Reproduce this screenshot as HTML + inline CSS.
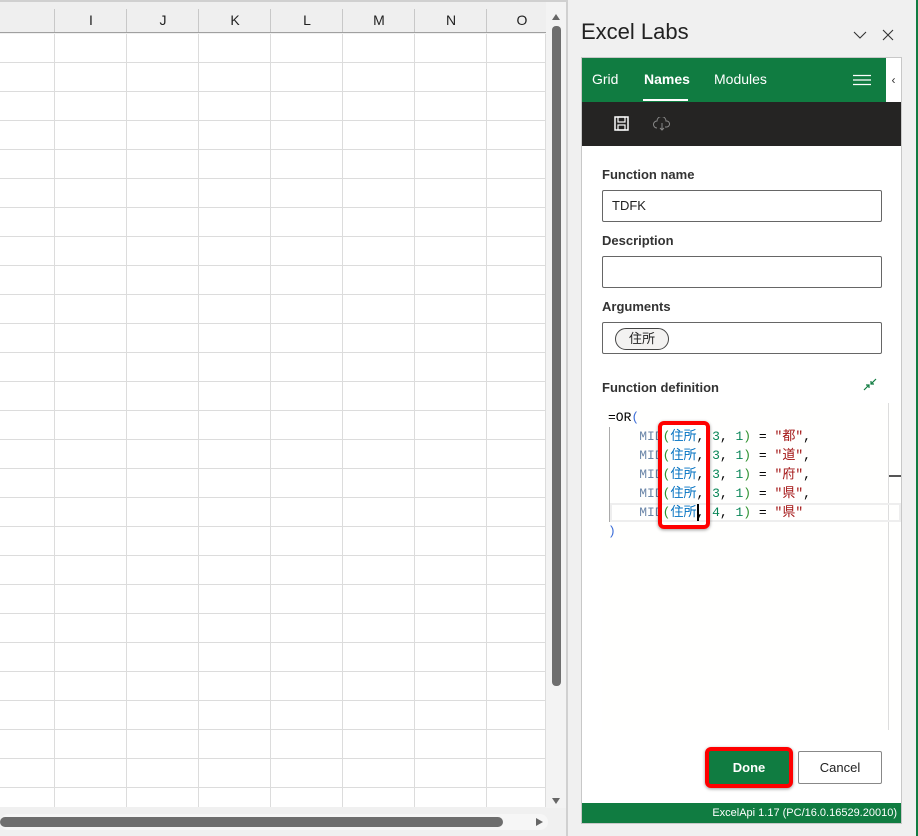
<!DOCTYPE html>
<html><head><meta charset="utf-8"><style>
*{margin:0;padding:0;box-sizing:border-box}
body{width:918px;height:836px;overflow:hidden;background:#f0f0f0;font-family:"Segoe UI","Liberation Sans","Noto Sans CJK JP",sans-serif;position:relative}
.a{position:absolute}
.hd{font-size:14px;color:#222;text-align:center;top:12px;width:72px}
.code{font-family:"Liberation Mono","Noto Sans CJK JP",monospace;font-size:13px;white-space:pre;line-height:19px}
.lbl{font-size:13px;font-weight:bold;color:#333;left:602px}
.box{left:602px;width:280px;height:32px;border:1px solid #666;border-radius:2px;background:#fff}
.m{color:#6b86a8}
</style></head><body>
<div class="a" style="left:0;top:0;width:567px;height:2px;background:#d0d0d0"></div>
<div class="a" style="left:0;top:2px;width:546px;height:31px;background:#efefef;border-bottom:1px solid #a0a0a0"></div>
<svg class="a" style="left:0;top:0" width="546" height="808">
<g stroke="#dcdcdc" stroke-width="1">
<line x1="0" x2="546" y1="62.5" y2="62.5"/><line x1="0" x2="546" y1="91.5" y2="91.5"/><line x1="0" x2="546" y1="120.5" y2="120.5"/><line x1="0" x2="546" y1="149.5" y2="149.5"/><line x1="0" x2="546" y1="178.5" y2="178.5"/><line x1="0" x2="546" y1="207.5" y2="207.5"/><line x1="0" x2="546" y1="236.5" y2="236.5"/><line x1="0" x2="546" y1="265.5" y2="265.5"/><line x1="0" x2="546" y1="294.5" y2="294.5"/><line x1="0" x2="546" y1="323.5" y2="323.5"/><line x1="0" x2="546" y1="352.5" y2="352.5"/><line x1="0" x2="546" y1="381.5" y2="381.5"/><line x1="0" x2="546" y1="410.5" y2="410.5"/><line x1="0" x2="546" y1="439.5" y2="439.5"/><line x1="0" x2="546" y1="468.5" y2="468.5"/><line x1="0" x2="546" y1="497.5" y2="497.5"/><line x1="0" x2="546" y1="526.5" y2="526.5"/><line x1="0" x2="546" y1="555.5" y2="555.5"/><line x1="0" x2="546" y1="584.5" y2="584.5"/><line x1="0" x2="546" y1="613.5" y2="613.5"/><line x1="0" x2="546" y1="642.5" y2="642.5"/><line x1="0" x2="546" y1="671.5" y2="671.5"/><line x1="0" x2="546" y1="700.5" y2="700.5"/><line x1="0" x2="546" y1="729.5" y2="729.5"/><line x1="0" x2="546" y1="758.5" y2="758.5"/><line x1="0" x2="546" y1="787.5" y2="787.5"/>
<line y1="34" y2="807" x1="54.5" x2="54.5"/><line y1="34" y2="807" x1="126.5" x2="126.5"/><line y1="34" y2="807" x1="198.5" x2="198.5"/><line y1="34" y2="807" x1="270.5" x2="270.5"/><line y1="34" y2="807" x1="342.5" x2="342.5"/><line y1="34" y2="807" x1="414.5" x2="414.5"/><line y1="34" y2="807" x1="486.5" x2="486.5"/>
<line y1="34" y2="807" x1="545.5" x2="545.5"/>
</g>
<g stroke="#c8c8c8"><line y1="9" y2="32" x1="54.5" x2="54.5"/><line y1="9" y2="32" x1="126.5" x2="126.5"/><line y1="9" y2="32" x1="198.5" x2="198.5"/><line y1="9" y2="32" x1="270.5" x2="270.5"/><line y1="9" y2="32" x1="342.5" x2="342.5"/><line y1="9" y2="32" x1="414.5" x2="414.5"/><line y1="9" y2="32" x1="486.5" x2="486.5"/></g>
</svg>
<div class="a" style="left:0;top:34px;width:546px;height:773px;z-index:-1;background:#fff"></div>
<div class="a hd" style="left:55px">I</div><div class="a hd" style="left:127px">J</div><div class="a hd" style="left:199px">K</div><div class="a hd" style="left:271px">L</div><div class="a hd" style="left:343px">M</div><div class="a hd" style="left:415px">N</div><div class="a hd" style="left:487px;width:70px">O</div>
<div class="a" style="left:546px;top:2px;width:20px;height:806px;background:#f3f3f3"></div>
<div class="a" style="left:552px;top:14px;width:0;height:0;border-left:4px solid transparent;border-right:4px solid transparent;border-bottom:6px solid #666"></div>
<div class="a" style="left:552px;top:26px;width:9px;height:660px;background:#6e6e6e;border-radius:4px"></div>
<div class="a" style="left:552px;top:798px;width:0;height:0;border-left:4px solid transparent;border-right:4px solid transparent;border-top:6px solid #666"></div>
<div class="a" style="left:0;top:808px;width:566px;height:28px;background:#f0f0f0"></div>
<div class="a" style="left:0;top:814px;width:548px;height:16px;background:#f6f6f6;border-radius:8px"></div>
<div class="a" style="left:0;top:817px;width:503px;height:10px;background:#6e6e6e;border-radius:5px"></div>
<div class="a" style="left:536px;top:818px;width:0;height:0;border-top:4px solid transparent;border-bottom:4px solid transparent;border-left:7px solid #666"></div>
<div class="a" style="left:566px;top:0;width:2px;height:836px;background:#d0d0d0"></div>
<div class="a" style="left:916px;top:0;width:2px;height:836px;background:#107c41"></div>
<div class="a" style="left:581px;top:19px;font-size:22px;color:#222">Excel Labs</div>
<svg class="a" style="left:853px;top:29px" width="44" height="12"><path d="M1 3l6 6 6-6" fill="none" stroke="#333" stroke-width="1.1"/><path d="M30 1l10 10M40 1l-10 10" stroke="#333" stroke-width="1.1"/></svg>
<div class="a" style="left:581px;top:57px;width:321px;height:767px;border:1px solid #c8c8c8;background:#fff"></div>
<div class="a" style="left:582px;top:58px;width:304px;height:44px;background:#107c41"></div>
<div class="a" style="left:886px;top:58px;width:15px;height:44px;background:#fff;font-size:12px;text-align:center;line-height:44px;color:#333">&lsaquo;</div>
<div class="a" style="left:592px;top:71px;font-size:14px;color:#fff">Grid</div>
<div class="a" style="left:644px;top:71px;font-size:14px;color:#fff;font-weight:bold">Names</div>
<div class="a" style="left:643px;top:99px;width:45px;height:2px;background:#fff"></div>
<div class="a" style="left:714px;top:71px;font-size:14px;color:#fff">Modules</div>
<svg class="a" style="left:853px;top:74px" width="18" height="12"><path d="M0 1.5h18M0 6h18M0 10.5h18" stroke="#fff" stroke-width="1.2"/></svg>
<div class="a" style="left:582px;top:102px;width:319px;height:44px;background:#252423"></div>
<svg class="a" style="left:614px;top:116px" width="16" height="16"><rect x="1" y="1" width="13" height="13" fill="none" stroke="#fff" stroke-width="1.5"/><rect x="4" y="1" width="7" height="5" fill="none" stroke="#fff" stroke-width="1.2"/><rect x="4" y="9" width="7" height="5" fill="none" stroke="#fff" stroke-width="1.2"/></svg>
<svg class="a" style="left:653px;top:117px" width="18" height="14"><path d="M4 11a3.5 3.5 0 0 1 0-7 4.5 4.5 0 0 1 9 0 3 3 0 0 1 1 6h-2M9 6v7M7 11l2 2 2-2" fill="none" stroke="#888" stroke-width="1"/></svg>
<div class="a lbl" style="top:167px">Function name</div>
<div class="a box" style="top:190px"><span style="position:absolute;left:9px;top:7px;font-size:13px;color:#222">TDFK</span></div>
<div class="a lbl" style="top:233px">Description</div>
<div class="a box" style="top:256px"></div>
<div class="a lbl" style="top:299px">Arguments</div>
<div class="a box" style="top:322px"><span style="position:absolute;left:12px;top:5px;height:22px;width:54px;border:1px solid #444;border-radius:11px;background:#f3f2f1;font-size:13px;text-align:center;line-height:20px;color:#222">住所</span></div>
<div class="a lbl" style="top:380px">Function definition</div>
<svg class="a" style="left:862px;top:377px" width="16" height="16"><path d="M2 13l5-5M4 8h3v3M14 2l-5 5M9 4v3h3" fill="none" stroke="#107c41" stroke-width="1.2"/></svg>
<div class="a" style="left:602px;top:403px;width:299px;height:327px;background:#fffffe"></div>
<div class="a" style="left:888px;top:403px;width:1px;height:327px;background:#ddd"></div>
<div class="a" style="left:889px;top:475px;width:12px;height:2px;background:#555"></div>
<div class="a" style="left:609px;top:427px;width:1px;height:95px;background:#aaa"></div>
<div class="a" style="left:610px;top:503px;width:291px;height:19px;border:2px solid #eee"></div>
<div class="a code" style="left:608px;top:408px;color:#000">=OR<span style="color:#3e6fd8">(</span></div>
<div class="a code" style="left:608px;top:427px;color:#000">    <span class="m">MID</span><span style="color:#319331">(</span><span style="color:#0070c1">住所</span>, <span style="color:#098658">3</span>, <span style="color:#098658">1</span><span style="color:#319331">)</span> = <span style="color:#a31515">"都"</span>,
    <span class="m">MID</span><span style="color:#319331">(</span><span style="color:#0070c1">住所</span>, <span style="color:#098658">3</span>, <span style="color:#098658">1</span><span style="color:#319331">)</span> = <span style="color:#a31515">"道"</span>,
    <span class="m">MID</span><span style="color:#319331">(</span><span style="color:#0070c1">住所</span>, <span style="color:#098658">3</span>, <span style="color:#098658">1</span><span style="color:#319331">)</span> = <span style="color:#a31515">"府"</span>,
    <span class="m">MID</span><span style="color:#319331">(</span><span style="color:#0070c1">住所</span>, <span style="color:#098658">3</span>, <span style="color:#098658">1</span><span style="color:#319331">)</span> = <span style="color:#a31515">"県"</span>,
    <span class="m">MID</span><span style="color:#319331">(</span><span style="color:#0070c1">住所</span>, <span style="color:#098658">4</span>, <span style="color:#098658">1</span><span style="color:#319331">)</span> = <span style="color:#a31515">"県"</span>
<span style="color:#3e6fd8">)</span></div>
<div class="a" style="left:658px;top:421px;width:52px;height:108px;border:4px solid #f00;border-radius:6px;box-shadow:0 1px 3px rgba(0,0,0,.4)"></div>
<div class="a" style="left:697px;top:504px;width:2px;height:17px;background:#000"></div>
<div class="a" style="left:705px;top:747px;width:88px;height:41px;border:4px solid #f00;border-radius:6px;background:#107c41;color:#fff;font-size:13px;font-weight:bold;text-align:center;line-height:33px;box-shadow:0 1px 3px rgba(0,0,0,.4)">Done</div>
<div class="a" style="left:798px;top:751px;width:84px;height:33px;border:1px solid #888;border-radius:2px;background:#fff;color:#222;font-size:13px;text-align:center;line-height:31px">Cancel</div>
<div class="a" style="left:582px;top:803px;width:319px;height:20px;background:#107c41;color:#fff;font-size:11px;text-align:right;padding-right:4px;line-height:20px">ExcelApi 1.17 (PC/16.0.16529.20010)</div>
</body></html>
